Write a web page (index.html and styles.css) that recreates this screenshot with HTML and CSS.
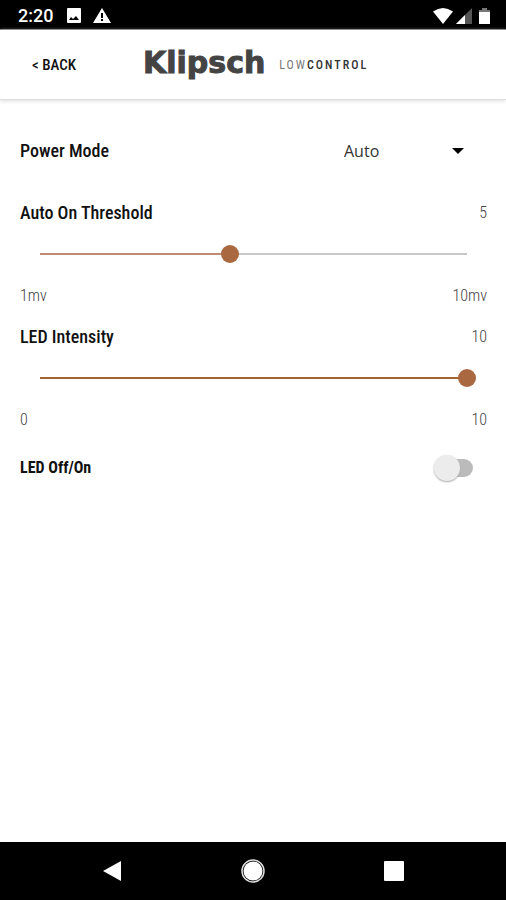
FILE: index.html
```html
<!DOCTYPE html>
<html lang="en">
<head>
<meta charset="utf-8">
<meta name="viewport" content="width=device-width, initial-scale=1">
<title>Klipsch Low Control</title>
<link rel="stylesheet" href="styles.css">
</head>
<body>
<div class="status">
  <span class="clock">2:20</span>
  <svg class="picture" width="14" height="15" viewBox="0 0 14 15" aria-hidden="true"><rect width="14" height="15" rx="1" fill="#fff"/><path d="M2 12l2-3 2 2 3-3 3 4z" fill="#000"/></svg>
  <svg width="18" height="15" viewBox="0 0 18 15" aria-hidden="true"><path d="M9 0l9 15H0z" fill="#fff"/><path d="M8 5h2v5H8zM8 11h2v2H8z" fill="#000"/></svg>
  <span class="signals">
    <svg width="20" height="16" viewBox="0 0 20 16" aria-hidden="true"><path d="M0 3.500Q10-3.500 20 3.500L10 16z" fill="#fff"/></svg>
    <svg width="16" height="16" viewBox="0 0 16 16" aria-hidden="true"><path d="M16 0v16H0z" fill="#555"/><path d="M9 7v9H0z" fill="#fff"/></svg>
    <svg class="battery" width="11" height="16" viewBox="0 0 11 16" aria-hidden="true"><path d="M3 0h5v2h3v2H0V2h3z" fill="#777"/><path d="M0 4h11v12H0z" fill="#fff"/></svg>
  </span>
</div>
<header class="header">
  <button class="back" type="button">&lt; BACK</button>
  <div class="brand">
    <span class="logo">Klipsch</span>
    <span class="product">LOW<b>CONTROL</b></span>
  </div>
</header>
<main class="settings">
  <div class="row mode">
    <label class="name" for="mode">Power Mode</label>
    <div class="dropdown">
      <select id="mode"><option>Auto</option></select>
      <svg width="12" height="6" viewBox="0 0 12 6" aria-hidden="true"><path d="M0 0h12L6 6z" fill="#000"/></svg>
    </div>
  </div>
  <section class="level">
    <div class="row"><label class="name" for="threshold">Auto On Threshold</label><output class="value" for="threshold">5</output></div>
    <input class="slider soft" id="threshold" type="range" min="1" max="10" value="5" style="--fill:44.4%">
    <div class="row value"><span>1mv</span><span>10mv</span></div>
  </section>
  <section class="level">
    <div class="row"><label class="name" for="intensity">LED Intensity</label><output class="value" for="intensity">10</output></div>
    <input class="slider" id="intensity" type="range" min="0" max="10" value="10" style="--fill:100%">
    <div class="row value"><span>0</span><span>10</span></div>
  </section>
  <div class="row power">
    <label class="name strong" for="led">LED Off/On</label>
    <input class="switch" id="led" type="checkbox">
  </div>
</main>
<nav class="system" aria-label="System">
  <button type="button" aria-label="Back"><svg width="20" height="22" viewBox="0 0 20 22"><path d="M19 1v20L1 11z" fill="#fff"/></svg></button>
  <button type="button" aria-label="Home"><svg width="24" height="24" viewBox="0 0 24 24"><circle cx="12" cy="12" r="11" fill="none" stroke="#ddd" stroke-width="1.500"/><circle cx="12" cy="12" r="9.500" fill="#fff"/></svg></button>
  <button type="button" aria-label="Recent apps"><svg width="20" height="20" viewBox="0 0 20 20"><rect width="20" height="20" rx="1" fill="#fff"/></svg></button>
</nav>
</body>
</html>
```
FILE: styles.css
```css
* { box-sizing: border-box; }

body {
  margin: 0;
  min-height: 100vh;
  display: flex;
  flex-direction: column;
  background: #fff;
  color: #111;
  font-family: "Roboto Condensed", "Liberation Sans Narrow", Roboto, sans-serif;
  font-size: 18px;
  line-height: 22px;
}

button, select { font: inherit; color: inherit; background: none; border: 0; padding: 0; }
svg { display: block; }

.status {
  display: flex;
  align-items: center;
  height: 30px;
  padding: 2px 16px 0 18px;
  background: #000;
  border-bottom: 1px solid #777;
}
.clock { font: 500 18px/22px Roboto, sans-serif; color: #fff; }
.picture { margin: 0 12px 0 14px; }
.signals { display: flex; gap: 3px; margin-left: auto; }
.battery { margin-left: 4px; }

.header {
  display: flex;
  align-items: center;
  height: 70px;
  padding: 0 32px;
  border-bottom: 1px solid #ddd;
  box-shadow: 0 1px 4px #ddd;
}
.back { flex: 0 0 111px; text-align: left; font-size: 15px; font-weight: 500; }
.brand { display: flex; align-items: center; gap: 14px; }
.logo {
  padding-bottom: 4px;
  font: bold 30px/36px "DejaVu Sans", sans-serif;
  color: #444;
  -webkit-text-stroke: 1px #444;
}
.product { font-size: 12px; line-height: 16px; letter-spacing: 2px; color: #777; }
.product b { color: #333; font-weight: 500; }

.settings { flex: 1; padding: 40px 19px 0 20px; }
.row { display: flex; justify-content: space-between; align-items: center; }
.name { font-weight: 500; }
.mode { margin-bottom: 40px; }
.value { color: #444; font-size: 16px; font-weight: 300; }
.strong { font-size: 16px; font-weight: bold; }

.dropdown { display: grid; align-items: center; width: 143px; }
.dropdown > * { grid-area: 1 / 1; }
.dropdown select { appearance: none; width: 100%; font: 16px/22px "Open Sans", sans-serif; color: #333; }
.dropdown svg { justify-self: end; margin-right: 23px; pointer-events: none; }

.level { margin-bottom: 19px; }
.slider {
  --line: #a5622f;
  appearance: none;
  display: block;
  width: calc(100% - 22px);
  height: 18px;
  margin: 21px 11px 22px;
  background: linear-gradient(to right, var(--line) var(--fill), #c8c8c8 var(--fill)) center / calc(100% - 18px) 2px no-repeat;
}
.slider.soft { --line: #bf8b72; }
.slider::-webkit-slider-thumb {
  appearance: none;
  width: 18px;
  height: 18px;
  border-radius: 50%;
  background: #a9683f;
}

.power { margin-top: 26px; }
.switch {
  appearance: none;
  position: relative;
  width: 34px;
  height: 18px;
  margin: 0 14px 0 0;
  border-radius: 9px;
  background: #bbb;
}
.switch::before {
  content: "";
  position: absolute;
  left: -5px;
  top: -4px;
  width: 26px;
  height: 26px;
  border-radius: 50%;
  background: #ececec;
  box-shadow: 0 1px 2px #aaa;
}
.switch:checked::before { left: 13px; }

.system {
  display: flex;
  justify-content: space-around;
  align-items: center;
  height: 58px;
  padding: 0 42px;
  background: #000;
}
.system button { display: grid; place-items: center; width: 48px; height: 48px; }
```
